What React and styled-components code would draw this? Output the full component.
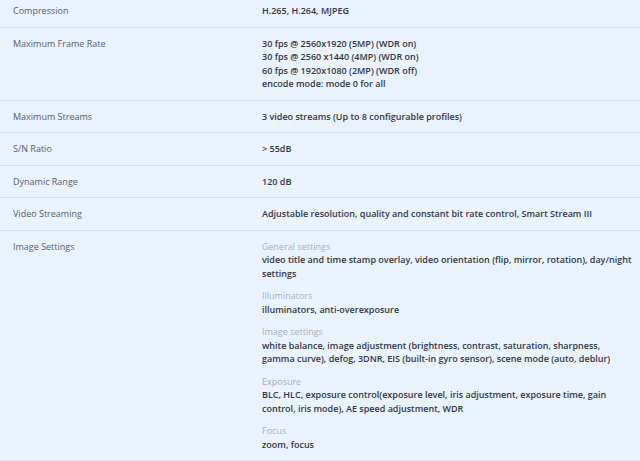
import React from 'react'
import styled, { createGlobalStyle } from 'styled-components'

const GlobalStyle = createGlobalStyle`
  html, body {
    margin: 0;
    padding: 0;
    background: #e9f2fd;
  }
  body {
    font-family: 'Open Sans', 'Noto Sans', sans-serif;
    -webkit-font-smoothing: antialiased;
  }
`

const Table = styled.div`
  width: 640px;
  height: 461px;
  overflow: hidden;
  background: #e9f2fd;
`

const Inner = styled.div`
  margin-top: -5px;
`

const Row = styled.div`
  display: grid;
  grid-template-columns: 249px 1fr;
  padding: 9px 8px 9px 13px;
  border-bottom: 1px solid #d7e1ec;
  font-size: 9px;
  line-height: 13.5px;
`

const Label = styled.div`
  color: #5a5f66;
`

const Value = styled.div`
  color: #34383d;
  font-weight: 600;
`

const Group = styled.div`
  & + & {
    margin-top: 9px;
  }
`

const Heading = styled.div`
  color: #a9afb6;
  font-weight: 400;
`

const specs = [
  ['Compression', ['H.265, H.264, MJPEG']],
  [
    'Maximum Frame Rate',
    [
      '30 fps @ 2560x1920 (5MP) (WDR on)',
      '30 fps @ 2560 x1440 (4MP) (WDR on)',
      '60 fps @ 1920x1080 (2MP) (WDR off)',
      'encode mode: mode 0 for all',
    ],
  ],
  ['Maximum Streams', ['3 video streams (Up to 8 configurable profiles)']],
  ['S/N Ratio', ['> 55dB']],
  ['Dynamic Range', ['120 dB']],
  ['Video Streaming', ['Adjustable resolution, quality and constant bit rate control, Smart Stream III']],
]

const imageSettings = [
  ['General settings', 'video title and time stamp overlay, video orientation (flip, mirror, rotation), day/night settings'],
  ['Illuminators', 'illuminators, anti-overexposure'],
  [
    'Image settings',
    'white balance, image adjustment (brightness, contrast, saturation, sharpness, gamma curve), defog, 3DNR, EIS (built-in gyro sensor), scene mode (auto, deblur)',
  ],
  [
    'Exposure',
    'BLC, HLC, exposure control(exposure level, iris adjustment, exposure time, gain control, iris mode), AE speed adjustment, WDR',
  ],
  ['Focus', 'zoom, focus'],
]

export default function App() {
  return (
    <Table>
      <GlobalStyle />
      <Inner>
        {specs.map(([label, lines]) => (
          <Row key={label}>
            <Label>{label}</Label>
            <Value>
              {lines.map((l) => (
                <div key={l}>{l}</div>
              ))}
            </Value>
          </Row>
        ))}
        <Row>
          <Label>Image Settings</Label>
          <Value>
            {imageSettings.map(([h, text]) => (
              <Group key={h}>
                <Heading>{h}</Heading>
                <div>{text}</div>
              </Group>
            ))}
          </Value>
        </Row>
      </Inner>
    </Table>
  )
}
